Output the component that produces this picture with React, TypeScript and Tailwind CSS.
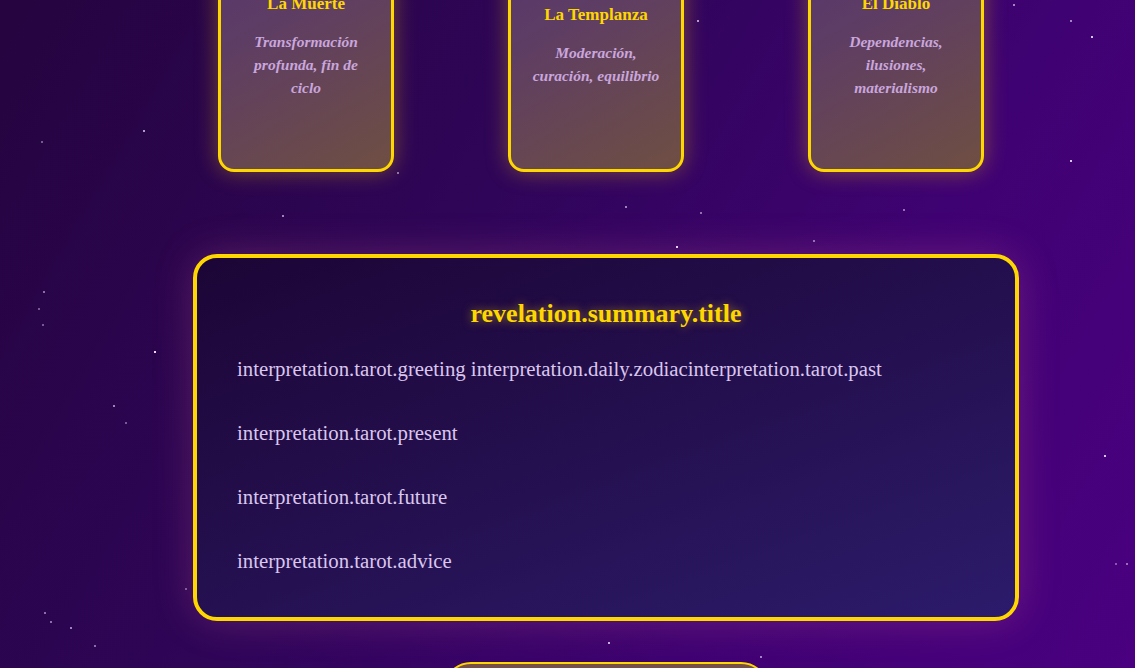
const stars: [number, number, number][] = [
  [697, 20, 0.7], [1070, 20, 0.6], [1091, 36, 0.9], [143, 130, 0.7], [41, 141, 0.4],
  [1070, 160, 0.9], [282, 215, 0.6], [625, 206, 0.6], [700, 212, 0.5], [903, 209, 0.5],
  [676, 246, 1], [813, 240, 0.5], [43, 291, 0.5], [38, 308, 0.4], [42, 324, 0.4],
  [154, 351, 1], [113, 405, 0.6], [125, 422, 0.4], [1104, 455, 0.9], [1115, 563, 0.4],
  [1126, 563, 0.5], [185, 588, 0.4], [44, 612, 0.5], [50, 621, 0.5], [70, 627, 0.6],
  [94, 645, 0.5], [608, 642, 0.8], [760, 656, 0.6], [1013, 4, 0.6], [397, 172, 0.5],
];

const cards = [
  { numeral: "XIII", name: "La Muerte", meaning: "Transformación profunda, fin de ciclo", gap: "" },
  { numeral: "XIV", name: "La Templanza", meaning: "Moderación, curación, equilibrio", gap: "ml-[114px]" },
  { numeral: "XV", name: "El Diablo", meaning: "Dependencias, ilusiones, materialismo", gap: "ml-[124px]" },
];

const lines = [
  "interpretation.tarot.greeting interpretation.daily.zodiacinterpretation.tarot.past",
  "interpretation.tarot.present",
  "interpretation.tarot.future",
  "interpretation.tarot.advice",
];

export default function App() {
  return (
    <div className="relative h-[668px] w-full overflow-hidden bg-[linear-gradient(120deg,#25043f_0%,#2f0559_40%,#3f0272_70%,#4a0080_100%)] font-['Liberation_Serif',serif]">
      {stars.map(([x, y, o], i) => (
        <span
          key={i}
          className="absolute h-[2px] w-[2px] bg-[#e8dcff]"
          style={{ left: x, top: y, opacity: o }}
        />
      ))}

      <div className="relative ml-[193px] flex w-[826px] flex-col">
        <div className="-mt-[162px] flex pl-[25px]">
          {cards.map((c) => (
            <div
              key={c.name}
              className={`${c.gap} flex h-[334px] w-[176px] flex-col items-center justify-center rounded-2xl border-[3px] border-[#ffd700] bg-[linear-gradient(150deg,#4f2d78_0%,#5e3d64_50%,#6f4f42_100%)] px-5 py-4 text-center shadow-[0_0_22px_rgba(255,200,0,0.35)]`}
            >
              <div className="mb-5 h-[60px] text-5xl leading-[60px] text-[#ffd700]">{c.numeral}</div>
              <h3 className="mb-[14px] text-[17px] font-bold leading-6 text-[#ffd700]">{c.name}</h3>
              <p className="text-[15.5px] font-bold italic leading-[23px] text-[#c9a6dc]">{c.meaning}</p>
            </div>
          ))}
        </div>

        <section className="mt-[82px] rounded-3xl border-4 border-[#ffd700] bg-[linear-gradient(160deg,#1c0536_0%,#24104f_50%,#2c1b6b_100%)] p-10 shadow-[0_0_40px_rgba(255,120,160,0.22)]">
          <h2 className="mb-[23px] text-center text-[26px] font-bold leading-8 text-[#ffd700] [text-shadow:0_0_10px_rgba(255,215,0,0.5)]">
            revelation.summary.title
          </h2>
          <div className="flex flex-col gap-8">
            {lines.map((l) => (
              <p key={l} className="text-[20.8px] leading-8 text-[#dac6ee]">
                {l}
              </p>
            ))}
          </div>
        </section>

        <button className="mx-auto mt-[41px] flex h-[56px] w-[326px] items-center justify-center rounded-full border-2 border-[#ffd700] bg-[linear-gradient(180deg,#765048_0%,#6a4a50_100%)] text-lg font-bold text-[#ffd700]">
          revelation.newReading
        </button>
      </div>
    </div>
  );
}
